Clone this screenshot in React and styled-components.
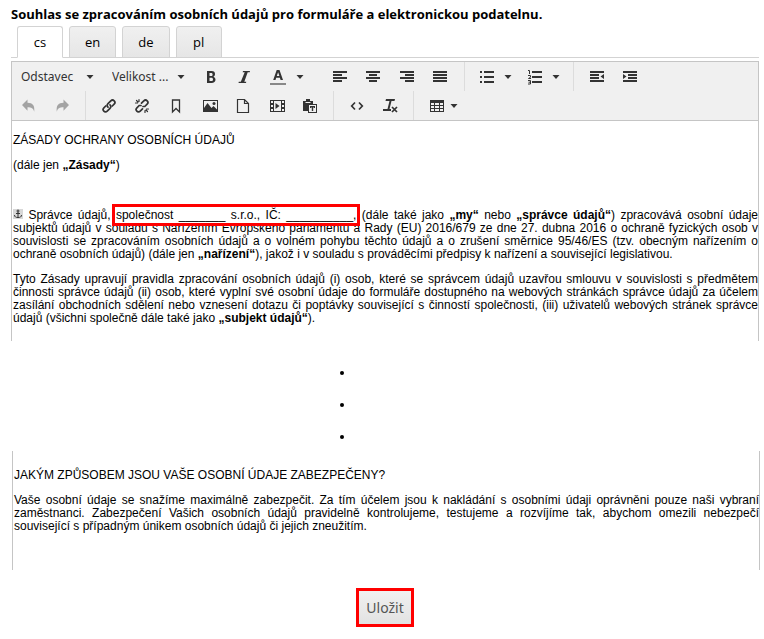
import React from "react";
import styled, { createGlobalStyle } from "styled-components";

const GlobalStyle = createGlobalStyle`
  * {
    box-sizing: border-box;
  }
  body {
    margin: 0;
    background: #fff;
    color: #000;
    font-family: "Noto Sans", sans-serif;
  }
`;

const Page = styled.main`
  padding: 5px 5px 12px 11px;
`;

const Title = styled.h1`
  margin: 0;
  font: bold 13px/18px "Open Sans", sans-serif;
  white-space: nowrap;
`;

const Tabs = styled.div`
  display: flex;
  gap: 6px;
  margin-top: 3px;
  padding-left: 6px;
  border-bottom: 1px solid #d3d3d3;
`;

const Tab = styled.button`
  min-width: 46px;
  height: 32px;
  margin-bottom: -1px;
  padding: 0 15px;
  border: 1px solid #d3d3d3;
  border-bottom-color: ${(p) => (p.$active ? "#fff" : "#d3d3d3")};
  border-radius: 3px 3px 0 0;
  background: ${(p) => (p.$active ? "#fff" : "linear-gradient(#f0f0f0, #e6e6e6)")};
  color: #000;
  font: 13px/18px "Open Sans", sans-serif;
`;

const Toolbar = styled.div`
  margin-top: 3px;
  border: 1px solid #c5c5c5;
  background: #f0f0f0;
`;

const ToolRow = styled.div`
  display: flex;
  height: 29px;
`;

const Group = styled.div`
  display: flex;
  width: ${(p) => p.$width}px;
  margin-right: ${(p) => p.$after || 0}px;
`;

const Separator = styled.span`
  width: 1px;
  margin-right: ${(p) => p.$after || 6}px;
  background: #dcdcdc;
`;

const ToolButton = styled.button`
  display: flex;
  flex: 1;
  align-items: center;
  justify-content: center;
  gap: ${(p) => p.$gap || 0}px;
  padding: 0;
  border: 0;
  background: none;
  color: #333;
  opacity: ${(p) => (p.disabled ? 0.4 : 1)};
`;

const Picker = styled.label`
  display: flex;
  align-items: center;
  width: 91px;
  padding: 0 9px;
  color: #333;
`;

const PickerSelect = styled.select`
  flex: 1;
  min-width: 0;
  padding: 0;
  border: 0;
  appearance: none;
  background: none;
  color: #333;
  font: 12px/18px "Noto Sans", sans-serif;
`;

const Document = styled.section`
  min-height: ${(p) => p.$height}px;
  margin-left: ${(p) => p.$shift || 0}px;
  margin-right: ${(p) => -(p.$shift || 0)}px;
  padding: ${(p) => p.$top}px 0 0 1px;
  border: solid #c5c5c5;
  border-width: 0 1px;
  font: 12px/13px "Liberation Sans", Arial, sans-serif;
`;

const Paragraph = styled.p`
  min-height: 13px;
  margin: 0 0 12px;
`;

const Line = styled.span`
  display: block;
  text-align: justify;
  text-align-last: ${(p) => (p.$last ? "left" : "justify")};
  white-space: nowrap;
`;

const Highlight = styled.span`
  outline: 3px solid #f00;
  outline-offset: 1px;
`;

const AnchorMark = styled.svg`
  width: 10px;
  height: 10px;
  background: #d8d8d8;
`;

const Dots = styled.div`
  display: flex;
  flex-direction: column;
  align-items: center;
  gap: 28px;
  padding: 30px 86px 12px 0;
`;

const Dot = styled.span`
  width: 4px;
  height: 4px;
  border-radius: 50%;
  background: #000;
`;

const Actions = styled.div`
  display: flex;
  justify-content: center;
  padding-top: 18px;
`;

const SaveButton = styled.button`
  height: 39px;
  padding: 0 7px;
  border: 3px solid #f00;
  background: linear-gradient(#f1f1f1, #e2e2e2);
  color: #555;
  font: 14px/20px "Noto Sans", sans-serif;
`;

const Icon = ({ children }) => (
  <svg width="16" height="16" viewBox="0 0 16 16" fill="currentColor" aria-hidden="true">
    {children}
  </svg>
);

const Caret = () => (
  <svg width="8" height="4" viewBox="0 0 8 4" fill="#333" aria-hidden="true">
    <path d="M.5 0h7L4 4z" />
  </svg>
);

const icons = {
  bold: <path fillRule="evenodd" d="M4 2h4.500C11 2 12 3.300 12 5c0 1.300-.6 2.200-1.600 2.700C11.700 8.200 12.500 9.300 12.500 10.800 12.500 12.800 11 14 8.500 14H4zm2.500 2v3h1.600c1 0 1.500-.5 1.500-1.500S9.100 4 8.100 4zm0 4.800V12h1.800c1.100 0 1.700-.5 1.700-1.600s-.6-1.600-1.700-1.600z" />,
  italic: <path d="M7 2h7l-.3 1.300h-2L8.300 12.700h2L10 14H2.500l.3-1.300h2L8.700 3.300h-2z" />,
  color: (
    <>
      <path fillRule="evenodd" d="M6.700 1h2.800L13 11h-2.400L9.900 8.700H6.200L5.500 11H3.200zm1.400 2.300L6.800 7h2.600z" />
      <path fill="#888" d="M0 14h16v2H0z" />
    </>
  ),
  left: <path d="M1 2h14v2H1zm0 3h9v2H1zm0 3h14v2H1zm0 3h9v2H1z" />,
  center: <path d="M1 2h14v2H1zm3 3h8v2H4zM1 8h14v2H1zm3 3h8v2H4z" />,
  right: <path d="M1 2h14v2H1zm5 3h9v2H6zM1 8h14v2H1zm5 3h9v2H6z" />,
  justify: <path d="M1 2h14v2H1zm0 3h14v2H1zm0 3h14v2H1zm0 3h14v2H1z" />,
  bullets: <path d="M1 2h2v2H1zm4 0h10v2H5zM1 7h2v2H1zm4 0h10v2H5zM1 12h2v2H1zm4 0h10v2H5z" />,
  numbers: (
    <>
      <path d="M5 2h10v2H5zm0 5h10v2H5zm0 5h10v2H5z" />
      <path fill="none" stroke="currentColor" d="M1 1.500h1.500V5M1 6.500h2.500v1.700L1.500 9.500h2.500M1 11.500h2.500V15H1m.5-1.800h2" />
    </>
  ),
  outdent: <path d="M1 2h14v2H1zm0 3h9v2H1zm0 3h9v2H1zm0 3h14v2H1zm14-6v5l-3.500-2.500z" />,
  indent: <path d="M1 2h14v2H1zm5 3h9v2H6zm0 3h9v2H6zm-5 3h14v2H1zm0-6v5l3.500-2.500z" />,
  undo: <path d="M6.500 1.500v3.300c5.200 0 7.500 2.700 6.700 8.900C12.300 10.500 10.500 9.300 6.500 9.300v3.400L1 7.100z" />,
  redo: <path d="M9.500 1.500v3.300c-5.200 0-7.500 2.700-6.700 8.900C3.700 10.500 5.500 9.300 9.500 9.300v3.400L15 7.100z" />,
  link: (
    <g fill="none" stroke="currentColor" strokeWidth="1.700" strokeLinecap="round">
      <path d="M7 9.200C5.800 8 6 6.700 7 5.700L9.800 2.900c2.300-2.300 5.600 1 3.300 3.300L11.300 8" />
      <path d="M9 6.800c1.200 1.200 1 2.500 0 3.500L6.200 13.100c-2.300 2.300-5.600-1-3.300-3.300L4.700 8" />
    </g>
  ),
  unlink: (
    <g fill="none" stroke="currentColor" strokeWidth="1.700" strokeLinecap="round">
      <path d="M7.500 5.200 9.800 2.900c2.300-2.300 5.600 1 3.300 3.300L10.800 8.500H9M8.500 10.800l-2.300 2.300c-2.300 2.300-5.600-1-3.300-3.300L5.200 7.500H7" />
      <path strokeWidth="1.200" d="M5 1.500v2M1.500 5h2M2.500 2.500 4 4M11 12.500v2M12.500 11h2M12 12l1.500 1.500" />
    </g>
  ),
  bookmark: <path fill="none" stroke="currentColor" strokeWidth="1.300" d="M4.500 2h7v12L8 10.500 4.500 14z" />,
  image: (
    <>
      <path fillRule="evenodd" d="M1 2h15v12H1zm1 1v10h13V3z" />
      <path d="M2 13V10l3.500-5 4 5 2-2L15 11.500V13z" />
      <circle cx="12" cy="5.500" r="1.500" />
    </>
  ),
  page: <path fill="none" stroke="currentColor" strokeWidth="1.200" d="M2.500 1.500h7l4 4v9h-11zm7 0v4h4" />,
  media: (
    <>
      <path fillRule="evenodd" d="M1 2h15v12H1zm4 1v10h7V3zM2 3v2h2V3zm0 4v2h2V7zm0 4v2h2v-2zM13 3v2h2V3zm0 4v2h2V7zm0 4v2h2v-2z" />
      <path d="M6.500 5v6l4-3z" />
    </>
  ),
  paste: (
    <>
      <path d="M1 3h3V1h4v2h3v3H6v7H1z" />
      <path fill="#f0f0f0" d="M3.500 4h5v1h-5z" />
      <path fill="#f0f0f0" d="M6 6h9v9H6z" />
      <path fillRule="evenodd" d="M6 6h9v9H6zm1 1v7h7V7z" />
      <path d="M8 8h5v2h-1V9.500h-.8V13H9.800V9.500H9v.5H8z" />
    </>
  ),
  code: <path fill="none" stroke="currentColor" strokeWidth="1.700" d="M6 4.500 2.700 8 6 11.500M10 4.500 13.300 8 10 11.500" />,
  clear: (
    <>
      <path d="M4 1h9l-.5 2h-3l-2 8h-2l2-8H3.500zM1 11h8v2H1z" />
      <path stroke="currentColor" strokeWidth="1.700" d="m10 9 5 5M15 9l-5 5" />
    </>
  ),
  table: <path fillRule="evenodd" d="M1 2h14v12H1zm1 3v2h3V5zm4 0v2h4V5zm5 0v2h3V5zM2 8v2h3V8zm4 0v2h4V8zm5 0v2h3V8zm-9 3v2h3v-2zm4 0v2h4v-2zm5 0v2h3v-2z" />,
};

const Tool = ({ icon, label, menu, ...rest }) => (
  <ToolButton type="button" aria-label={label} {...rest}>
    <Icon>{icons[icon]}</Icon>
    {menu && <Caret />}
  </ToolButton>
);

const ListBox = ({ label, value }) => (
  <Picker>
    <PickerSelect aria-label={label} defaultValue={value}>
      <option>{value}</option>
    </PickerSelect>
    <Caret />
  </Picker>
);

const languages = ["cs", "en", "de", "pl"];

export default function App() {
  return (
    <Page>
      <GlobalStyle />
      <Title>Souhlas se zpracováním osobních údajů pro formuláře a elektronickou podatelnu.</Title>
      <Tabs role="tablist">
        {languages.map((lang) => (
          <Tab key={lang} type="button" role="tab" aria-selected={lang === "cs"} $active={lang === "cs"}>
            {lang}
          </Tab>
        ))}
      </Tabs>

      <Toolbar role="toolbar">
        <ToolRow>
          <ListBox label="Formát" value="Odstavec" />
          <ListBox label="Velikost písma" value="Velikost ..." />
          <Group $width={67}>
            <Tool icon="bold" label="Tučné" />
            <Tool icon="italic" label="Kurzíva" />
          </Group>
          <Group $width={52} $after={10}>
            <Tool icon="color" label="Barva textu" menu $gap={10} />
          </Group>
          <Group $width={134} $after={7}>
            <Tool icon="left" label="Zarovnat vlevo" />
            <Tool icon="center" label="Zarovnat na střed" />
            <Tool icon="right" label="Zarovnat vpravo" />
            <Tool icon="justify" label="Zarovnat do bloku" />
          </Group>
          <Separator />
          <Group $width={97} $after={5}>
            <Tool icon="bullets" label="Odrážky" menu $gap={9} />
            <Tool icon="numbers" label="Číslování" menu $gap={9} />
          </Group>
          <Separator />
          <Group $width={67}>
            <Tool icon="outdent" label="Zmenšit odsazení" />
            <Tool icon="indent" label="Zvětšit odsazení" />
          </Group>
        </ToolRow>
        <ToolRow>
          <Group $width={67} $after={6}>
            <Tool icon="undo" label="Zpět" disabled />
            <Tool icon="redo" label="Znovu" disabled />
          </Group>
          <Separator />
          <Group $width={235} $after={6}>
            <Tool icon="link" label="Vložit odkaz" />
            <Tool icon="unlink" label="Odstranit odkaz" />
            <Tool icon="bookmark" label="Záložka" />
            <Tool icon="image" label="Obrázek" />
            <Tool icon="page" label="Dokument" />
            <Tool icon="media" label="Video" />
            <Tool icon="paste" label="Vložit jako text" />
          </Group>
          <Separator />
          <Group $width={67} $after={6}>
            <Tool icon="code" label="Zdrojový kód" />
            <Tool icon="clear" label="Vymazat formátování" />
          </Group>
          <Separator />
          <Group $width={46}>
            <Tool icon="table" label="Tabulka" menu $gap={5} />
          </Group>
        </ToolRow>
      </Toolbar>

      <Document $height={220} $top={13}>
        <Paragraph>ZÁSADY OCHRANY OSOBNÍCH ÚDAJŮ</Paragraph>
        <Paragraph>
          (dále jen <b>„Zásady“</b>)
        </Paragraph>
        <Paragraph />
        <Paragraph>
          <Line>
            <AnchorMark viewBox="0 0 10 10" fill="none" stroke="#333">
              <path d="M5 3v6M3 4.500h4M1.500 6c0 2 1.500 2.500 3.500 2.500S8.500 8 8.500 6" />
              <circle cx="5" cy="2" r="1" />
            </AnchorMark>{" "}
            Správce údajů, <Highlight>společnost _______ s.r.o., IČ: __________,</Highlight> (dále také jako{" "}
            <b>„my“</b> nebo <b>„správce údajů“</b>) zpracovává osobní údaje
          </Line>
          <Line>subjektů údajů v souladu s Nařízením Evropského parlamentu a Rady (EU) 2016/679 ze dne 27. dubna 2016 o ochraně fyzických osob v</Line>
          <Line>souvislosti se zpracováním osobních údajů a o volném pohybu těchto údajů a o zrušení směrnice 95/46/ES (tzv. obecným nařízením o</Line>
          <Line $last>
            ochraně osobních údajů) (dále jen <b>„nařízení“</b>), jakož i v souladu s prováděcími předpisy k nařízení a související legislativou.
          </Line>
        </Paragraph>
        <Paragraph>
          <Line>Tyto Zásady upravují pravidla zpracování osobních údajů (i) osob, které se správcem údajů uzavřou smlouvu v souvislosti s předmětem</Line>
          <Line>činnosti správce údajů (ii) osob, které vyplní své osobní údaje do formuláře dostupného na webových stránkách správce údajů za účelem</Line>
          <Line>zasílání obchodních sdělení nebo vznesení dotazu či poptávky související s činností společnosti, (iii) uživatelů webových stránek správce</Line>
          <Line $last>
            údajů (všichni společně dále také jako <b>„subjekt údajů“</b>).
          </Line>
        </Paragraph>
      </Document>

      <Dots>
        <Dot />
        <Dot />
        <Dot />
      </Dots>

      <Document $height={119} $top={18} $shift={1}>
        <Paragraph>JAKÝM ZPŮSOBEM JSOU VAŠE OSOBNÍ ÚDAJE ZABEZPEČENY?</Paragraph>
        <Paragraph>
          <Line>Vaše osobní údaje se snažíme maximálně zabezpečit. Za tím účelem jsou k nakládání s osobními údaji oprávněni pouze naši vybraní</Line>
          <Line>zaměstnanci. Zabezpečení Vašich osobních údajů pravidelně kontrolujeme, testujeme a rozvíjíme tak, abychom omezili nebezpečí</Line>
          <Line $last>související s případným únikem osobních údajů či jejich zneužitím.</Line>
        </Paragraph>
      </Document>

      <Actions>
        <SaveButton type="button">Uložit</SaveButton>
      </Actions>
    </Page>
  );
}
